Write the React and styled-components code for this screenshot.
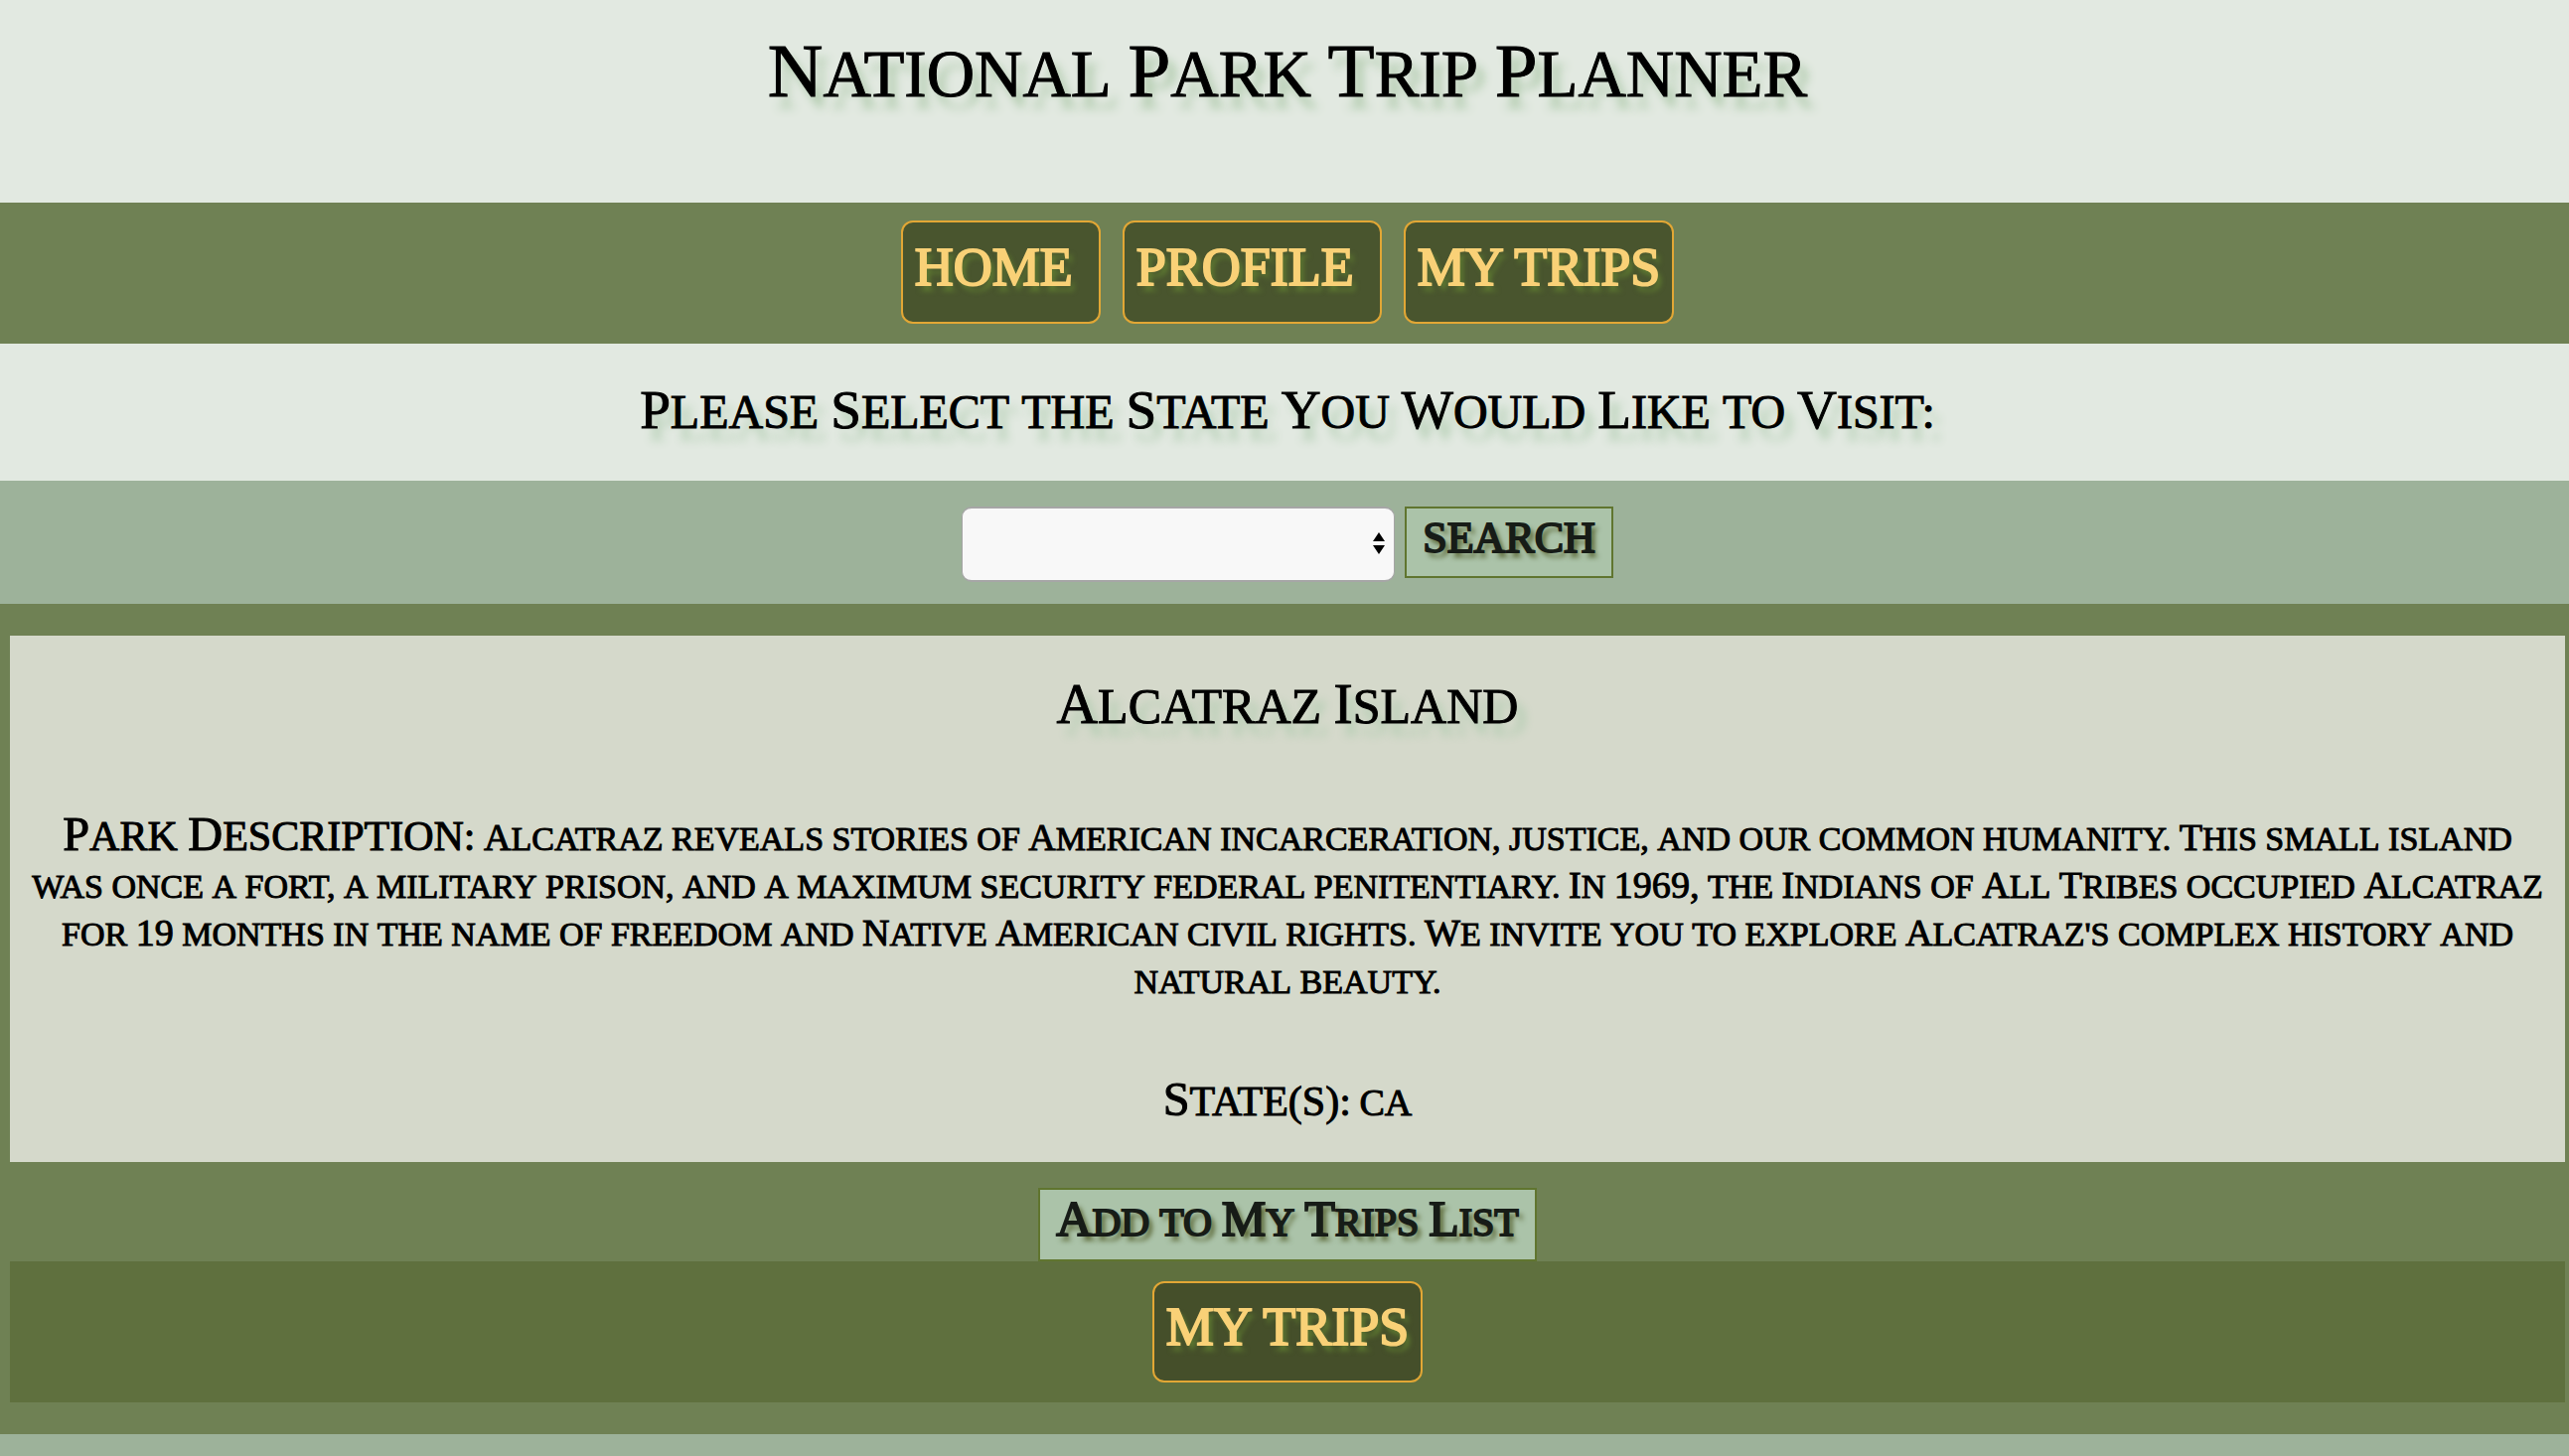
import React, { Fragment, useState } from "react";
import styled, { createGlobalStyle } from "styled-components";

const GlobalStyle = createGlobalStyle`
  *, *::before, *::after { box-sizing: border-box; }
  body {
    margin: 0;
    background: #9db29a;
    color: #000;
    font-family: "Liberation Serif", "Times New Roman", serif;
  }
`;

const Band = styled.div`
  padding: 0 4px 0 10px;
  text-align: center;
`;

const Header = styled(Band).attrs({ as: "header" })`
  background: #e2e9e1;
  padding-top: 26px;
  padding-bottom: 82px;
`;

const Title = styled.h1`
  margin: 0;
  font-size: 67px;
  line-height: 96px;
  font-weight: 400;
  -webkit-text-stroke: 1px #000;
  text-shadow: 8px 12px 10px #aec9aa;
`;

const Nav = styled(Band).attrs({ as: "nav" })`
  display: flex;
  justify-content: center;
  gap: 22px;
  padding-top: 18px;
  padding-bottom: 20px;
  background: #6f8154;
`;

const ParkLink = styled.a`
  display: inline-block;
  padding: 14px ${(p) => (p.$wide ? 26 : 12)}px 24px 12px;
  border: 2px solid #e2a735;
  border-radius: 12px;
  background: ${(p) => (p.$dark ? "#454f2a" : "#49552e")};
  color: #f9d177;
  font-size: 54px;
  line-height: ${(p) => (p.$dark ? 60 : 62)}px;
  text-decoration: none;
  -webkit-text-stroke: 2px #f9d177;
  text-shadow: 4px 6px 5px #5f7c31;
`;

const Prompt = styled(Band)`
  background: #e2e9e1;
  padding-top: 34px;
  padding-bottom: 34px;
`;

const Heading = styled.h2`
  margin: 0;
  font-size: ${(p) => (p.$compact ? 48 : 50)}px;
  line-height: 70px;
  font-weight: 400;
  -webkit-text-stroke: 1px #000;
  text-shadow: 8px 12px 10px #aecbae;
`;

const SearchForm = styled(Band).attrs({ as: "form" })`
  display: flex;
  align-items: flex-start;
  justify-content: center;
  gap: 10px;
  padding-top: 26px;
  padding-bottom: 22px;
  background: #9db29a;
`;

const SelectBox = styled.label`
  position: relative;
  width: 436px;
  height: 76px;
`;

const StateSelect = styled.select`
  appearance: none;
  width: 100%;
  height: 100%;
  padding: 0 50px 0 16px;
  border: 2px solid #a6a6a6;
  border-left-width: 1px;
  border-right-width: 1px;
  border-radius: 10px;
  background: #f8f8f8;
  color: #000;
  font: 32px "Liberation Serif", serif;
`;

const Arrows = styled.svg`
  position: absolute;
  right: 10px;
  top: 26px;
  pointer-events: none;
`;

const ActionButton = styled.button`
  padding: 0 16px ${(p) => (p.$list ? 4 : 8)}px;
  border: 2px solid #60752f;
  border-radius: 0;
  background: #abc3a9;
  color: #171c17;
  font-family: "Liberation Serif", serif;
  font-size: ${(p) => (p.$list ? 40 : 44)}px;
  line-height: ${(p) => (p.$list ? 66 : 60)}px;
  -webkit-text-stroke: 2px #171c17;
  text-shadow: 4px 5px 5px #4f5a26;
`;

const Results = styled(Band).attrs({ as: "main" })`
  padding-top: 32px;
  padding-bottom: 32px;
  background: #6f8154;
`;

const Card = styled.article`
  padding: 36px 20px 34px;
  background: #d5d9cb;
`;

const Detail = styled.p`
  margin: 72px 0 0;
  font-size: 34px;
  line-height: 48px;
  -webkit-text-stroke: 1px #000;
`;

const Label = styled.strong`
  font-size: 42px;
  font-weight: 400;
`;

const AddRow = styled.div`
  display: flex;
  justify-content: center;
  padding-top: 26px;
`;

const TripsBar = styled.div`
  display: flex;
  justify-content: center;
  padding: 20px 0;
  background: #5f703e;
`;

const Word = styled.span`
  display: inline-block;
  font-size: ${(p) => (p.$full ? p.$ratio : 1)}em;
  line-height: 1;
  text-transform: uppercase;

  &::first-letter {
    font-size: ${(p) => (p.$initial ? p.$ratio : 1)}em;
    line-height: 0;
  }
`;

/* Capitals with a slightly larger initial on each capitalised word. */
function Capitals({ children, ratio = 1.15 }) {
  return children.split(" ").map((word, i) => {
    const full = /^([A-Z]{2,}|\d+,?)$/.test(word);
    return (
      <Fragment key={i}>
        {i > 0 && " "}
        <Word
          $ratio={ratio}
          $full={full}
          $initial={!full && /^[A-Z]/.test(word)}
        >
          {word}
        </Word>
      </Fragment>
    );
  });
}

const park = {
  name: "Alcatraz Island",
  description:
    "Alcatraz reveals stories of American incarceration, justice, and our common humanity. This small island was once a fort, a military prison, and a maximum security federal penitentiary. In 1969, the Indians of All Tribes occupied Alcatraz for 19 months in the name of freedom and Native American civil rights. We invite you to explore Alcatraz's complex history and natural beauty.",
  states: "CA",
};

export default function App() {
  const [state, setState] = useState("");

  return (
    <>
      <GlobalStyle />
      <Header>
        <Title>
          <Capitals>National Park Trip Planner</Capitals>
        </Title>
      </Header>
      <Nav>
        <ParkLink href="#home" $wide>HOME</ParkLink>
        <ParkLink href="#profile" $wide>PROFILE</ParkLink>
        <ParkLink href="#trips">MY TRIPS</ParkLink>
      </Nav>
      <Prompt>
        <Heading id="state-prompt" $compact>
          <Capitals>Please Select the State You Would Like to Visit:</Capitals>
        </Heading>
      </Prompt>
      <SearchForm onSubmit={(e) => e.preventDefault()}>
        <SelectBox>
          <StateSelect
            aria-labelledby="state-prompt"
            value={state}
            onChange={(e) => setState(e.target.value)}
          >
            <option value="" />
            <option value="CA">CA</option>
          </StateSelect>
          <Arrows width="12" height="30" viewBox="0 0 12 30" aria-hidden="true">
            <path d="M6 0 12 9H0ZM6 22 0 13h12Z" fill="#000" />
          </Arrows>
        </SelectBox>
        <ActionButton type="submit">SEARCH</ActionButton>
      </SearchForm>
      <Results>
        <Card>
          <Heading>
            <Capitals>{park.name}</Capitals>
          </Heading>
          <Detail>
            <Label>
              <Capitals>Park Description:</Capitals>
            </Label>{" "}
            <Capitals ratio={1.12}>{park.description}</Capitals>
          </Detail>
          <Detail>
            <Label>
              <Capitals>State(s):</Capitals>
            </Label>{" "}
            <Capitals ratio={1.12}>{park.states}</Capitals>
          </Detail>
        </Card>
        <AddRow>
          <ActionButton type="button" $list>
            <Capitals ratio={1.25}>Add to My Trips List</Capitals>
          </ActionButton>
        </AddRow>
        <TripsBar>
          <ParkLink href="#trips" $dark>MY TRIPS</ParkLink>
        </TripsBar>
      </Results>
    </>
  );
}
